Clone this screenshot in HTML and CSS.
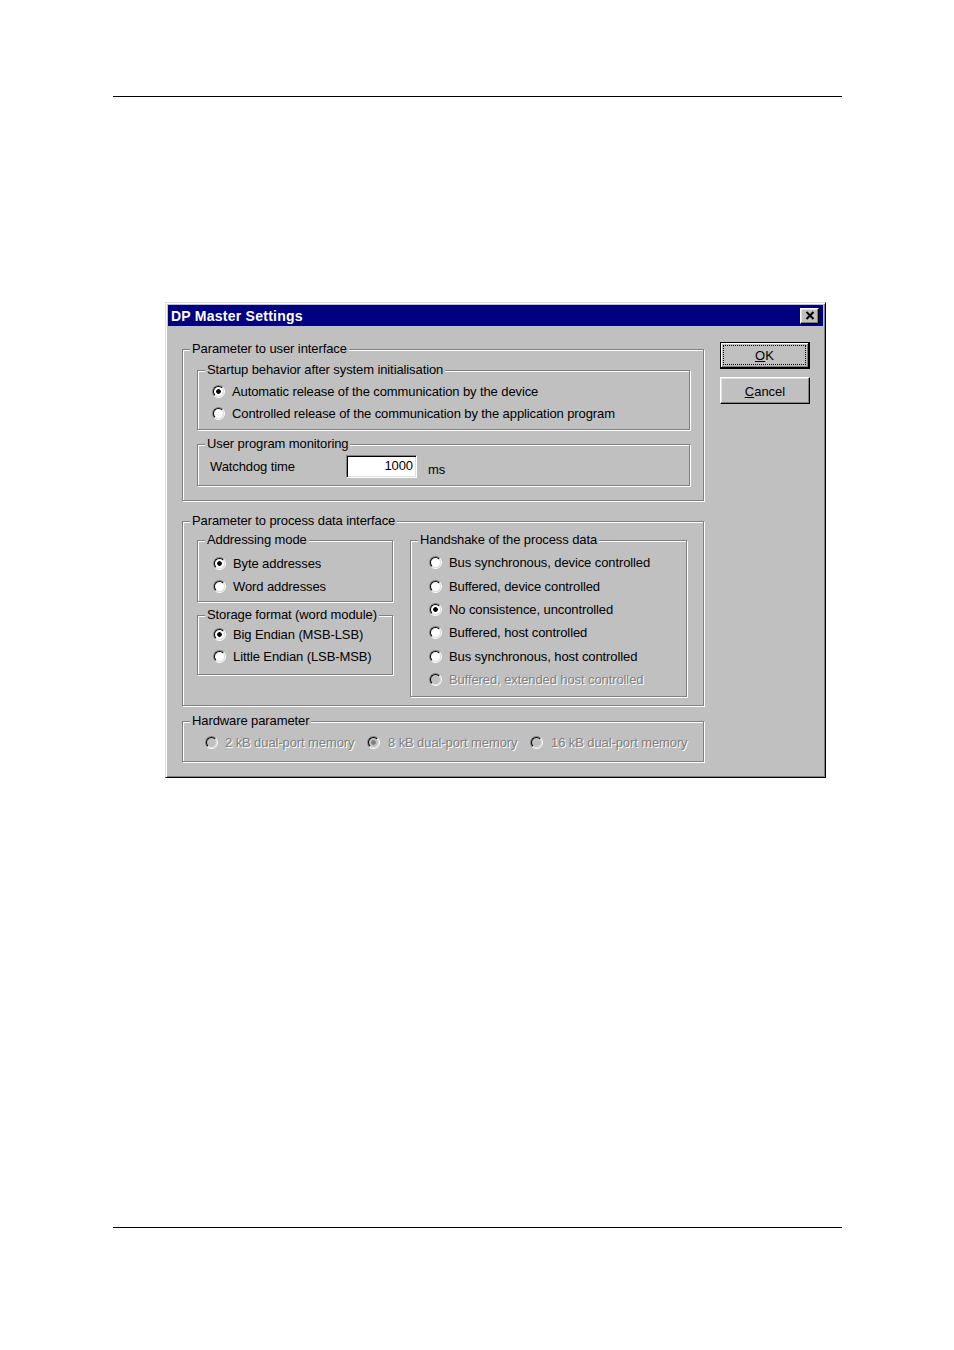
FILE: index.html
```html
<!DOCTYPE html>
<html>
<head>
<meta charset="utf-8">
<title>DP Master Settings</title>
<link rel="stylesheet" href="styles.css">
</head>
<body>
<div class="page">
  <div class="rule"></div>
  <div class="dialog">
    <div class="titlebar">
      <span class="title">DP Master Settings</span>
      <span class="close"><svg width="10" height="9" viewBox="0 0 10 9"><path d="M1.5 1 L8.5 8 M8.5 1 L1.5 8" stroke="#000" stroke-width="2" fill="none"/></svg></span>
    </div>
    <div class="client">
      <div class="main">
        <fieldset class="group g1">
          <legend>Parameter to user interface</legend>
          <div class="gbody g1-body">
            <fieldset class="group startup">
              <legend>Startup behavior after system initialisation</legend>
              <div class="gbody startup-body">
                <div class="opt r22"><span class="radio on"></span><span>Automatic release of the communication by the device</span></div>
                <div class="opt r22"><span class="radio"></span><span>Controlled release of the communication by the application program</span></div>
              </div>
            </fieldset>
            <fieldset class="group monitor">
              <legend>User program monitoring</legend>
              <div class="gbody monitor-body">
                <span class="wd-label">Watchdog time</span>
                <span class="field">1000</span>
                <span class="unit">ms</span>
              </div>
            </fieldset>
          </div>
        </fieldset>

        <fieldset class="group g2">
          <legend>Parameter to process data interface</legend>
          <div class="gbody g2-body">
            <div class="leftcol">
              <fieldset class="group addr">
                <legend>Addressing mode</legend>
                <div class="gbody addr-body">
                  <div class="opt r23"><span class="radio on"></span><span>Byte addresses</span></div>
                  <div class="opt r23"><span class="radio"></span><span>Word addresses</span></div>
                </div>
              </fieldset>
              <fieldset class="group storage">
                <legend>Storage format (word module)</legend>
                <div class="gbody storage-body">
                  <div class="opt r22"><span class="radio on"></span><span>Big Endian (MSB-LSB)</span></div>
                  <div class="opt r22"><span class="radio"></span><span>Little Endian (LSB-MSB)</span></div>
                </div>
              </fieldset>
            </div>
            <fieldset class="group hand">
              <legend>Handshake of the process data</legend>
              <div class="gbody hand-body">
                <div class="opt rh"><span class="radio"></span><span>Bus synchronous, device controlled</span></div>
                <div class="opt rh"><span class="radio"></span><span>Buffered, device controlled</span></div>
                <div class="opt rh"><span class="radio on"></span><span>No consistence, uncontrolled</span></div>
                <div class="opt rh"><span class="radio"></span><span>Buffered, host controlled</span></div>
                <div class="opt rh"><span class="radio"></span><span>Bus synchronous, host controlled</span></div>
                <div class="opt rh disabled"><span class="radio"></span><span>Buffered, extended host controlled</span></div>
              </div>
            </fieldset>
          </div>
        </fieldset>

        <fieldset class="group g3">
          <legend>Hardware parameter</legend>
          <div class="gbody g3-body">
            <div class="opt r22 disabled hw1"><span class="radio"></span><span>2 kB dual-port memory</span></div>
            <div class="opt r22 disabled hw2"><span class="radio on"></span><span>8 kB dual-port memory</span></div>
            <div class="opt r22 disabled hw3"><span class="radio"></span><span>16 kB dual-port memory</span></div>
          </div>
        </fieldset>
      </div>

      <div class="buttons">
        <div class="btn default"><div class="focus"><span><u>O</u>K</span></div></div>
        <div class="btn cancel"><div class="nofocus"><span><u>C</u>ancel</span></div></div>
      </div>
    </div>
  </div>
  <div class="rule bottom"></div>
</div>
</body>
</html>
```

FILE: styles.css
```css
html, body {
  margin: 0;
  padding: 0;
  background: #fff;
}
body {
  width: 954px;
  height: 1350px;
  font-family: "Liberation Sans", Arial, sans-serif;
  font-size: 13px;
  color: #000;
}
.page {
  padding-top: 96px;
}
.rule {
  margin-left: 113px;
  width: 729px;
  height: 1px;
  background: #000;
}
.rule.bottom {
  margin-top: 449px;
}

/* dialog */
.dialog {
  margin: 205px 0 0 165px;
  width: 661px;
  height: 476px;
  box-sizing: border-box;
  background: #c0c0c0;
  border: 1px solid;
  border-color: #dfdfdf #000 #000 #dfdfdf;
  box-shadow: inset 1px 1px 0 #fff, inset -1px -1px 0 #808080;
  padding: 2px;
}
.titlebar {
  height: 21px;
  background: #000080;
  display: flex;
  align-items: center;
  justify-content: space-between;
  padding: 0 4px 0 3px;
}
.title {
  color: #fff;
  font-weight: bold;
  font-size: 14px;
  letter-spacing: 0.25px;
}
.close {
  width: 19px;
  height: 16px;
  box-sizing: border-box;
  background: #c0c0c0;
  border: 1px solid;
  border-color: #fff #000 #000 #fff;
  box-shadow: inset -1px -1px 0 #808080, inset 1px 1px 0 #dfdfdf;
  display: flex;
  align-items: center;
  justify-content: center;
}
.close svg { display: block; }

.client {
  display: flex;
  padding: 15px 0 0 14px;
  letter-spacing: -0.1px;
}
.main {
  width: 522px;
}
.buttons {
  margin-left: 16px;
  width: 90px;
  display: flex;
  flex-direction: column;
  letter-spacing: 0;
}

/* group boxes */
.group {
  margin: 0;
  padding: 0;
  min-width: 0;
  box-sizing: border-box;
  border: 1px solid #808080;
  box-shadow: inset 1px 1px 0 #fff, 1px 1px 0 #fff;
}
.group > legend {
  margin-left: 7px;
  padding: 0 2px;
  line-height: 16px;
  background: #c0c0c0;
}
.gbody {
  box-sizing: border-box;
}

.g1 { height: 160px; }
.g1-body { padding: 5px 0 0 14px; }
.startup { width: 493px; height: 68px; }
.startup-body { padding: 2px 0 0 14px; }
.monitor { width: 493px; height: 50px; margin-top: 6px; }
.monitor-body {
  padding: 3px 0 0 12px;
  display: flex;
  align-items: flex-start;
}
.wd-label {
  width: 136px;
  line-height: 23px;
}
.field {
  width: 71px;
  height: 23px;
  box-sizing: border-box;
  background: #fff;
  border: 1px solid;
  border-color: #808080 #fff #fff #808080;
  box-shadow: inset 1px 1px 0 #000, inset -1px -1px 0 #dfdfdf;
  text-align: right;
  padding-right: 3px;
  line-height: 20px;
}
.unit {
  margin-left: 11px;
  line-height: 23px;
  padding-top: 3px;
}

.g2 { height: 193px; margin-top: 12px; }
.g2-body {
  padding: 3px 0 0 14px;
  display: flex;
  align-items: flex-start;
}
.leftcol {
  width: 196px;
  display: flex;
  flex-direction: column;
}
.addr { height: 70px; }
.addr-body { padding: 4px 0 0 15px; }
.storage { height: 68px; margin-top: 5px; }
.storage-body { padding: 0 0 0 15px; }
.hand { width: 277px; height: 165px; margin-left: 17px; }
.hand-body { padding: 3px 0 0 18px; }

.g3 { height: 49px; margin-top: 7px; }
.g3-body {
  padding: 2px 0 0 22px;
  display: flex;
}
.hw1 { width: 162px; }
.hw2 { width: 163px; }
.hw2 .radio, .hw3 .radio { margin-right: 8px; }

/* options */
.opt {
  display: flex;
  align-items: center;
  white-space: nowrap;
}
.r22 { height: 22px; }
.r23 { height: 23px; }
.rh { height: 23.4px; }
.radio {
  flex: none;
  width: 13px;
  height: 13px;
  box-sizing: border-box;
  border-radius: 50%;
  border: 1px solid;
  border-color: #808080 #fff #fff #808080;
  margin-right: 7px;
}
.radio::before {
  content: "";
  display: block;
  width: 11px;
  height: 11px;
  box-sizing: border-box;
  border-radius: 50%;
  border: 1px solid;
  border-color: #000 #dfdfdf #dfdfdf #000;
  background: #fff;
}
.radio.on::before {
  background: radial-gradient(circle at 50% 50%, #000 0, #000 2px, #fff 2.6px);
}
.disabled {
  color: #808080;
  text-shadow: 1px 1px 0 #fff;
}
.disabled .radio::before {
  background: #c0c0c0;
}
.disabled .radio.on::before {
  background: radial-gradient(circle at 50% 50%, #808080 0, #808080 2px, #c0c0c0 2.6px);
}

/* buttons */
.btn {
  height: 27px;
  box-sizing: border-box;
  background: #c0c0c0;
  display: flex;
}
.btn.default {
  margin-top: 1px;
  border: 1px solid #000;
  box-shadow: inset -1px -1px 0 #000, inset 1px 1px 0 #fff, inset -2px -2px 0 #808080;
  padding: 2px 3px 3px 2px;
}
.btn.cancel {
  margin-top: 8px;
  border: 1px solid;
  border-color: #fff #000 #000 #fff;
  box-shadow: inset -1px -1px 0 #808080, inset 1px 1px 0 #dfdfdf;
  padding: 1px 1px 0 1px;
}
.focus, .nofocus {
  flex: 1;
  display: flex;
  align-items: center;
  justify-content: center;
}
.focus {
  border: 1px dotted #000;
}
.btn u { text-decoration: underline; text-underline-offset: 1px; }
```
